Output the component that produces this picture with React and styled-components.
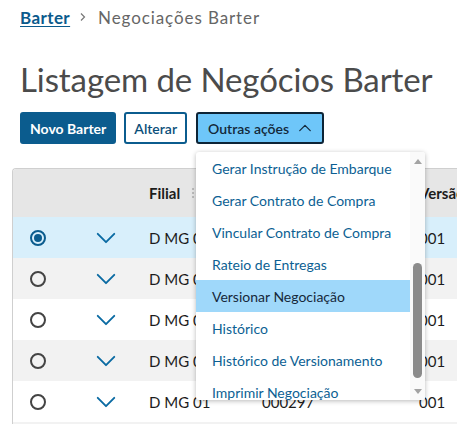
import React from "react";
import styled, { createGlobalStyle } from "styled-components";

const Global = createGlobalStyle`
  html, body { margin: 0; padding: 0; background: #fff; }
  body { font-family: Lato, "Noto Sans", sans-serif; overflow: hidden; }
  * { box-sizing: border-box; }
`;

const Page = styled.div`
  position: relative;
  width: 457px;
  height: 424px;
  overflow: hidden;
`;

const Header = styled.div`
  padding: 0 0 0 20px;
`;

const Crumbs = styled.nav`
  display: flex;
  align-items: center;
  height: 36px;
  padding-bottom: 2px;
  font-size: 17px;
  letter-spacing: 0.9px;
  gap: 8px;
`;

const CrumbLink = styled.a`
  color: #0b5a8c;
  font-weight: 700;
  text-decoration: underline;
  text-underline-offset: 2px;
  letter-spacing: 0.4px;
`;

const CrumbSep = styled.span`
  display: flex;
  margin-right: 2px;
`;

const CrumbCurrent = styled.span`
  color: #666;
`;

const Title = styled.h1`
  margin: 22px 0 0 0;
  font-size: 33px;
  font-weight: 400;
  color: #4b4b4b;
  line-height: 42px;
  letter-spacing: -0.1px;
`;

const Toolbar = styled.div`
  display: flex;
  gap: 8px;
  margin-top: 12px;
`;

const Button = styled.button`
  height: 32px;
  border-radius: 3px;
  font-family: Lato, sans-serif;
  font-size: 14px;
  padding: 0 ${(p) => p.$px}px;
  display: flex;
  align-items: center;
  gap: 9px;
  cursor: pointer;
  ${(p) =>
    p.$variant === "primary"
      ? `background:#0b5c8e;color:#fff;border:2px solid #0b5c8e;font-weight:700;`
      : p.$variant === "active"
      ? `background:#6ec6f9;color:#13283a;border:2px solid #0d2436;font-weight:600;margin-left:1px;`
      : `background:#fff;color:#0b4f7a;border:2px solid #0b5c8e;font-weight:600;`}
`;

const Table = styled.div`
  margin: 24px 0 0 12px;
  border-left: 1px solid #cfcfcf;
  border-top: 1px solid #cfcfcf;
  border-top-left-radius: 4px;
  overflow: hidden;
`;

const Row = styled.div`
  display: grid;
  grid-template-columns: 50px 86px 113px 157px 1fr;
  align-items: center;
  height: ${(p) => (p.$head ? 48 : 41)}px;
  background: ${(p) => p.$bg};
  font-size: 15px;
  color: #1c1c1c;
`;

const HeadCell = styled.div`
  font-weight: 700;
  font-size: 15px;
  color: #1c1c1c;
  display: flex;
  align-items: center;
  gap: 12px;
`;

const Center = styled.div`
  display: flex;
  justify-content: center;
  align-items: center;
`;

const Cell = styled.div`
  white-space: nowrap;
`;

const Radio = styled.span`
  width: 16px;
  height: 16px;
  border-radius: 50%;
  border: 2px solid ${(p) => (p.$on ? "#0b5c8e" : "#444")};
  display: flex;
  align-items: center;
  justify-content: center;
  &::after {
    content: "";
    width: 8px;
    height: 8px;
    border-radius: 50%;
    background: ${(p) => (p.$on ? "#0b5c8e" : "transparent")};
  }
`;

const Dots = styled.span`
  width: 2px;
  height: 10px;
  background: repeating-linear-gradient(#bbb 0 2px, transparent 2px 4px);
`;

const Menu = styled.div`
  position: absolute;
  left: 196px;
  top: 152px;
  width: 229px;
  height: 248px;
  background: #fff;
  border-radius: 3px;
  box-shadow: 0 1px 5px rgba(0, 0, 0, 0.28);
  overflow: hidden;
  display: flex;
`;

const MenuList = styled.ul`
  list-style: none;
  margin: 0;
  padding: 0;
  flex: 1;
`;

const MenuItem = styled.li`
  height: 32px;
  display: flex;
  align-items: center;
  padding-left: 16px;
  font-size: 14px;
  white-space: nowrap;
  color: ${(p) => (p.$active ? "#16283a" : "#0c5f93")};
  background: ${(p) => (p.$active ? "#9fd8fa" : "transparent")};
`;

const Scrollbar = styled.div`
  width: 15px;
  background: #fafafa;
  display: flex;
  flex-direction: column;
  align-items: center;
  padding: 7px 0 6px;
`;

const Arrow = styled.span`
  width: 0;
  height: 0;
  border-left: 4px solid transparent;
  border-right: 4px solid transparent;
  ${(p) =>
    p.$up
      ? "border-bottom: 5px solid #a3a3a3;"
      : "border-top: 5px solid #a3a3a3;"}
`;

const Track = styled.div`
  flex: 1;
  width: 100%;
  display: flex;
  justify-content: center;
  padding-top: 99px;
  padding-bottom: 9px;
`;

const Thumb = styled.div`
  width: 9px;
  height: 115px;
  border-radius: 5px;
  background: #8b8b8b;
`;

const Chevron = ({ up, color = "#0b6ba3", size = 16 }) => (
  <svg width={size} height={size} viewBox="0 0 16 16" fill="none">
    <path
      d={up ? "M2 11L8 5l6 6" : "M2 5l6 6 6-6"}
      stroke={color}
      strokeWidth="1.4"
      strokeLinecap="round"
      strokeLinejoin="round"
    />
  </svg>
);

const rows = [
  { bg: "#d8effb", on: true },
  { bg: "#f2f2f2" },
  { bg: "#ffffff" },
  { bg: "#f2f2f2" },
  { bg: "#ffffff" },
  { bg: "#f2f2f2" },
];

const items = [
  "Gerar Instrução de Embarque",
  "Gerar Contrato de Compra",
  "Vincular Contrato de Compra",
  "Rateio de Entregas",
  "Versionar Negociação",
  "Histórico",
  "Histórico de Versionamento",
  "Imprimir Negociação",
];

export default function App() {
  return (
    <Page>
      <Global />
      <Header>
        <Crumbs>
          <CrumbLink>Barter</CrumbLink>
          <CrumbSep>
            <svg width="10" height="10" viewBox="0 0 10 10" fill="none">
              <path d="M3 1.5L6.5 5 3 8.5" stroke="#777" strokeWidth="1.2" />
            </svg>
          </CrumbSep>
          <CrumbCurrent>Negociações Barter</CrumbCurrent>
        </Crumbs>
        <Title>Listagem de Negócios Barter</Title>
        <Toolbar>
          <Button $variant="primary" $px={8}>
            Novo Barter
          </Button>
          <Button $variant="secondary" $px={8}>
            Alterar
          </Button>
          <Button $variant="active" $px={10}>
            Outras ações
            <Chevron up color="#13283a" size={14} />
          </Button>
        </Toolbar>
      </Header>
      <Table>
        <Row $head $bg="#e6e6e6">
          <div />
          <div />
          <HeadCell>
            Filial <Dots />
          </HeadCell>
          <div />
          <HeadCell>Versão</HeadCell>
        </Row>
        {rows.map((r, i) => (
          <Row key={i} $bg={r.bg}>
            <Center>
              <Radio $on={r.on} />
            </Center>
            <Center>
              <Chevron size={22} />
            </Center>
            <Cell>D MG 01</Cell>
            <Cell>000297</Cell>
            <Cell>001</Cell>
          </Row>
        ))}
      </Table>
      <Menu>
        <MenuList>
          {items.map((t, i) => (
            <MenuItem key={t} $active={i === 4}>
              {t}
            </MenuItem>
          ))}
        </MenuList>
        <Scrollbar>
          <Arrow $up />
          <Track>
            <Thumb />
          </Track>
          <Arrow />
        </Scrollbar>
      </Menu>
    </Page>
  );
}
